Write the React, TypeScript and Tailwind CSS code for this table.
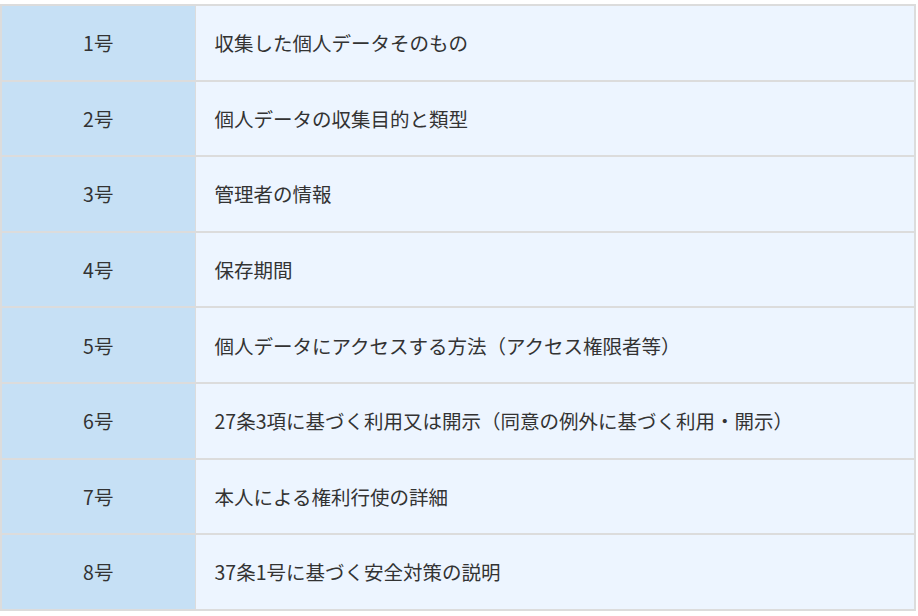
const rows = [
  { no: "1号", text: "収集した個人データそのもの" },
  { no: "2号", text: "個人データの収集目的と類型" },
  { no: "3号", text: "管理者の情報" },
  { no: "4号", text: "保存期間" },
  { no: "5号", text: "個人データにアクセスする方法（アクセス権限者等）" },
  { no: "6号", text: "27条3項に基づく利用又は開示（同意の例外に基づく利用・開示）" },
  { no: "7号", text: "本人による権利行使の詳細" },
  { no: "8号", text: "37条1号に基づく安全対策の説明" },
];

export default function App() {
  return (
    <div className="w-[918px] h-[616px] bg-white pt-1 font-['Noto_Sans_CJK_JP','Noto_Sans',sans-serif] text-[#333]">
      <table className="w-[916px] border-collapse border-2 border-[#dcdcdc] text-[19.5px]">
        <tbody>
          {rows.map((r) => (
            <tr key={r.no} className="h-[75.6px] border-b-2 border-[#dcdcdc]">
              <td className="w-[194px] bg-[#c6e0f5] text-center border-r border-[#dcdcdc] p-0">
                {r.no}
              </td>
              <td className="bg-[#edf5ff] pl-[19px] p-0">{r.text}</td>
            </tr>
          ))}
        </tbody>
      </table>
    </div>
  );
}
